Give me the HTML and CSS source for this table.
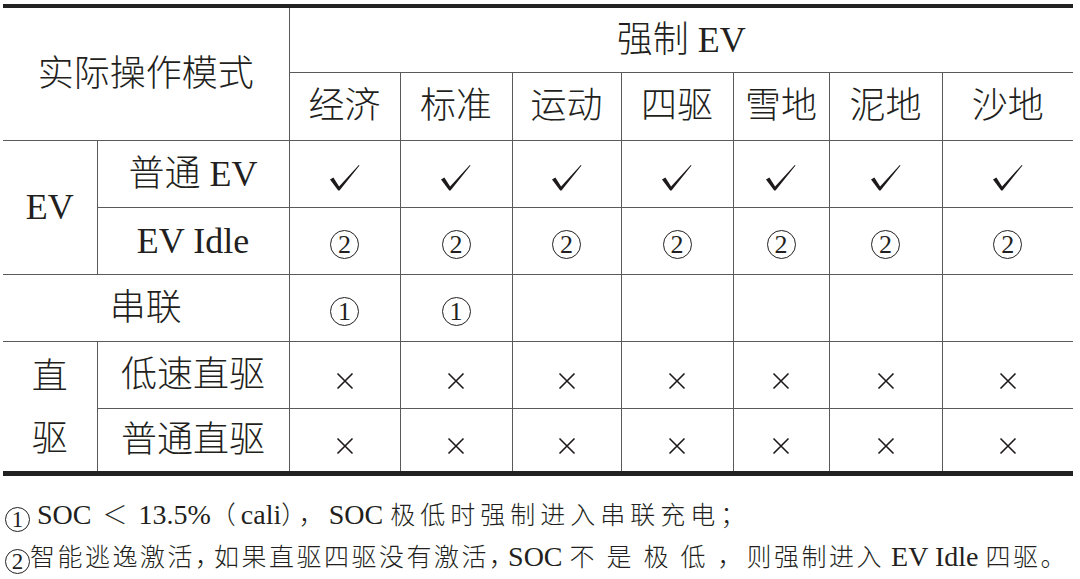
FILE: index.html
```html
<!DOCTYPE html>
<html lang="zh-CN">
<head>
<meta charset="utf-8">
<title>实际操作模式</title>
<link rel="stylesheet" href="styles.css">
</head>
<body>
<div class="page">
  <table class="modes">
    <colgroup>
      <col class="c-a"><col class="c-b">
      <col class="c-1"><col class="c-2"><col class="c-3"><col class="c-4"><col class="c-5"><col class="c-6"><col class="c-7">
    </colgroup>
    <tbody>
      <tr class="r-top">
        <td colspan="2" rowspan="2">实际操作模式</td>
        <td colspan="7">强制 EV</td>
      </tr>
      <tr class="r-head">
        <td>经济</td><td>标准</td><td>运动</td><td>四驱</td><td>雪地</td><td>泥地</td><td>沙地</td>
      </tr>
      <tr class="r-mid">
        <td rowspan="2">EV</td>
        <td>普通 EV</td>
        <td><svg class="chk" viewBox="0 0 32 27"><path d="M1 15.4 L4.4 13.6 L10.1 22.6 L29.8 0.9 L30.5 1.5 L10.5 26.4 L9.2 26.4 Z"/></svg></td>
        <td><svg class="chk" viewBox="0 0 32 27"><path d="M1 15.4 L4.4 13.6 L10.1 22.6 L29.8 0.9 L30.5 1.5 L10.5 26.4 L9.2 26.4 Z"/></svg></td>
        <td><svg class="chk" viewBox="0 0 32 27"><path d="M1 15.4 L4.4 13.6 L10.1 22.6 L29.8 0.9 L30.5 1.5 L10.5 26.4 L9.2 26.4 Z"/></svg></td>
        <td><svg class="chk" viewBox="0 0 32 27"><path d="M1 15.4 L4.4 13.6 L10.1 22.6 L29.8 0.9 L30.5 1.5 L10.5 26.4 L9.2 26.4 Z"/></svg></td>
        <td><svg class="chk" viewBox="0 0 32 27"><path d="M1 15.4 L4.4 13.6 L10.1 22.6 L29.8 0.9 L30.5 1.5 L10.5 26.4 L9.2 26.4 Z"/></svg></td>
        <td><svg class="chk" viewBox="0 0 32 27"><path d="M1 15.4 L4.4 13.6 L10.1 22.6 L29.8 0.9 L30.5 1.5 L10.5 26.4 L9.2 26.4 Z"/></svg></td>
        <td><svg class="chk" viewBox="0 0 32 27"><path d="M1 15.4 L4.4 13.6 L10.1 22.6 L29.8 0.9 L30.5 1.5 L10.5 26.4 L9.2 26.4 Z"/></svg></td>
      </tr>
      <tr class="r-mid">
        <td>EV Idle</td>
        <td><span class="circ">2</span></td>
        <td><span class="circ">2</span></td>
        <td><span class="circ">2</span></td>
        <td><span class="circ">2</span></td>
        <td><span class="circ">2</span></td>
        <td><span class="circ">2</span></td>
        <td><span class="circ">2</span></td>
      </tr>
      <tr class="r-mid">
        <td colspan="2">串联</td>
        <td><span class="circ">1</span></td>
        <td><span class="circ">1</span></td>
        <td></td><td></td><td></td><td></td><td></td>
      </tr>
      <tr class="r-mid">
        <td rowspan="2" class="vert">直<br>驱</td>
        <td>低速直驱</td>
        <td><svg class="x" viewBox="0 0 18 18"><path d="M1.5 1.5 L16.5 16.5 M16.5 1.5 L1.5 16.5"/></svg></td>
        <td><svg class="x" viewBox="0 0 18 18"><path d="M1.5 1.5 L16.5 16.5 M16.5 1.5 L1.5 16.5"/></svg></td>
        <td><svg class="x" viewBox="0 0 18 18"><path d="M1.5 1.5 L16.5 16.5 M16.5 1.5 L1.5 16.5"/></svg></td>
        <td><svg class="x" viewBox="0 0 18 18"><path d="M1.5 1.5 L16.5 16.5 M16.5 1.5 L1.5 16.5"/></svg></td>
        <td><svg class="x" viewBox="0 0 18 18"><path d="M1.5 1.5 L16.5 16.5 M16.5 1.5 L1.5 16.5"/></svg></td>
        <td><svg class="x" viewBox="0 0 18 18"><path d="M1.5 1.5 L16.5 16.5 M16.5 1.5 L1.5 16.5"/></svg></td>
        <td><svg class="x" viewBox="0 0 18 18"><path d="M1.5 1.5 L16.5 16.5 M16.5 1.5 L1.5 16.5"/></svg></td>
      </tr>
      <tr class="r-last">
        <td>普通直驱</td>
        <td><svg class="x" viewBox="0 0 18 18"><path d="M1.5 1.5 L16.5 16.5 M16.5 1.5 L1.5 16.5"/></svg></td>
        <td><svg class="x" viewBox="0 0 18 18"><path d="M1.5 1.5 L16.5 16.5 M16.5 1.5 L1.5 16.5"/></svg></td>
        <td><svg class="x" viewBox="0 0 18 18"><path d="M1.5 1.5 L16.5 16.5 M16.5 1.5 L1.5 16.5"/></svg></td>
        <td><svg class="x" viewBox="0 0 18 18"><path d="M1.5 1.5 L16.5 16.5 M16.5 1.5 L1.5 16.5"/></svg></td>
        <td><svg class="x" viewBox="0 0 18 18"><path d="M1.5 1.5 L16.5 16.5 M16.5 1.5 L1.5 16.5"/></svg></td>
        <td><svg class="x" viewBox="0 0 18 18"><path d="M1.5 1.5 L16.5 16.5 M16.5 1.5 L1.5 16.5"/></svg></td>
        <td><svg class="x" viewBox="0 0 18 18"><path d="M1.5 1.5 L16.5 16.5 M16.5 1.5 L1.5 16.5"/></svg></td>
      </tr>
    </tbody>
  </table>
  <div class="notes">
    <p><span class="circ sm">1</span> SOC <span class="k lt">＜</span> 13.5%<span class="k w">（</span>cali<span class="k w">），</span>SOC <span class="k w">极低时强制进入串联充电；</span></p>
    <p><span class="circ sm">2</span><span class="k">智能逃逸激活<span class="p">，</span>如果直驱四驱没有激活<span class="p">，</span></span>SOC <span class="k wide">不是极低</span><span class="k cm">，</span><span class="k">则强制进入</span> EV Idle <span class="k">四驱。</span></p>
  </div>
</div>
</body>
</html>
```

FILE: styles.css
```css
html, body {
  margin: 0;
  padding: 0;
  background: #ffffff;
}

.page {
  padding: 4px 7px 0 3px;
  color: #231f20;
  font-family: "Liberation Serif", "Noto Sans CJK SC", serif;
}

.modes {
  width: 1070px;
  table-layout: fixed;
  border-collapse: collapse;
  border-top: 4px solid #222222;
  border-bottom: 5px solid #222222;
  font-size: 36px;
  font-weight: 300;
}

.c-a { width: 94px; }
.c-b { width: 192px; }
.c-1 { width: 111px; }
.c-2 { width: 112px; }
.c-3 { width: 109px; }
.c-4 { width: 112px; }
.c-5 { width: 96px; }
.c-6 { width: 113px; }
.c-7 { width: 131px; }

.modes td {
  border: 1px solid #5a5a5a;
  padding: 0;
  text-align: center;
  vertical-align: middle;
  line-height: 40px;
  white-space: nowrap;
}

.modes tr > td:first-child { border-left: none; }
.modes tr > td:last-child { border-right: none; }
.modes tr.r-top td { border-top: none; }
.modes tr.r-last td { border-bottom: none; }

.r-top { height: 66px; }
.r-head { height: 68px; }
.r-mid { height: 67px; }
.r-last { height: 65px; }

.modes td.vert {
  line-height: 62px;
  border-left: none;
  padding-top: 4px;
}

.chk {
  display: inline-block;
  width: 32px;
  height: 27px;
  vertical-align: middle;
  fill: #1e1a1b;
}

.x {
  display: inline-block;
  width: 18px;
  height: 18px;
  vertical-align: middle;
  margin-top: 6px;
  stroke: #1e1a1b;
  stroke-width: 1.6;
  fill: none;
}

.circ {
  display: inline-block;
  box-sizing: border-box;
  width: 29px;
  height: 29px;
  border: 1.3px solid #231f20;
  border-radius: 50%;
  font-family: "Liberation Serif", serif;
  font-size: 26px;
  line-height: 27px;
  text-align: center;
  vertical-align: middle;
  font-weight: 400;
}

.notes {
  margin-top: 17px;
  padding-left: 2px;
  font-size: 28px;
}

.notes p {
  margin: 0;
  line-height: 41px;
  white-space: nowrap;
}

.notes .k {
  font-family: "Noto Sans CJK SC", sans-serif;
  font-size: 25px;
  letter-spacing: 2.5px;
  font-weight: 300;
}

.notes .k.w {
  letter-spacing: 5px;
}

.notes .k.lt {
  letter-spacing: 4px;
  margin-left: 4px;
}

.notes .k.wide {
  letter-spacing: 12px;
}

.notes .k.cm {
  letter-spacing: 4px;
}

.notes .p {
  letter-spacing: -6px;
}

.circ.sm {
  width: 25px;
  height: 25px;
  font-size: 23px;
  line-height: 23px;
  border-width: 1.2px;
  vertical-align: -3px;
}
```
